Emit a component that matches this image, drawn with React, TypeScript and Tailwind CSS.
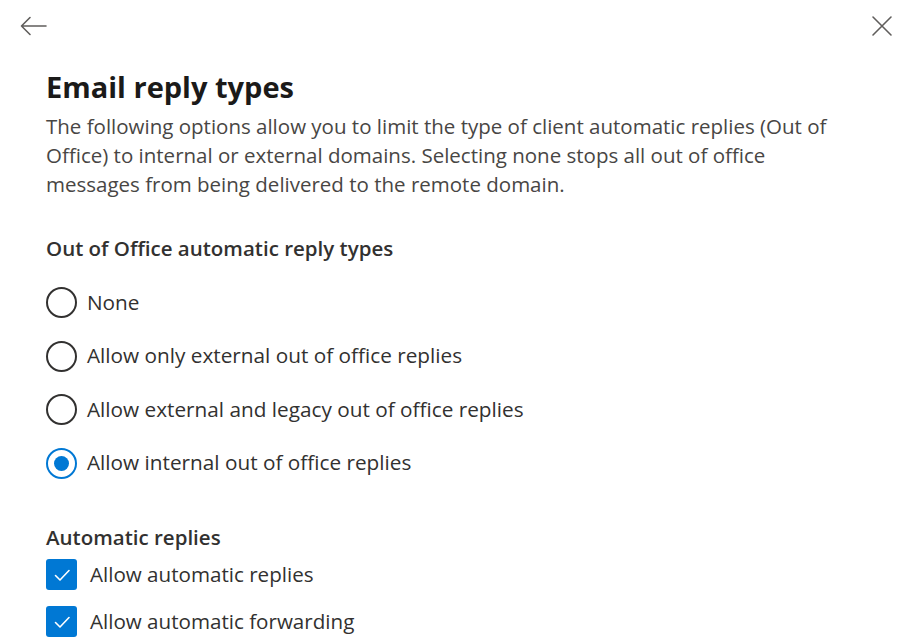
import React from "react";

function Radio({ checked, label }: { checked?: boolean; label: string }) {
  return (
    <div className="flex items-center h-[31px]">
      <div
        className={
          "w-[31px] h-[31px] rounded-full border-[2px] flex items-center justify-center shrink-0 " +
          (checked ? "border-[#0078d4]" : "border-[#323130]")
        }
      >
        {checked && <div className="w-[15px] h-[15px] rounded-full bg-[#0078d4]" />}
      </div>
      <span className="ml-[10px] text-[20.75px] text-[#323130]">{label}</span>
    </div>
  );
}

function Check({ label }: { label: string }) {
  return (
    <div className="flex items-center h-[31px]">
      <div className="w-[31px] h-[31px] rounded-[3px] bg-[#0078d4] flex items-center justify-center shrink-0">
        <svg width="22" height="22" viewBox="0 0 22 22" fill="none">
          <path d="M4.5 11.5 L9 16 L18 6.5" stroke="white" strokeWidth="1.6" strokeLinecap="round" strokeLinejoin="round" />
        </svg>
      </div>
      <span className="ml-[13px] text-[20.6px] text-[#323130]">{label}</span>
    </div>
  );
}

export default function App() {
  return (
    <div
      className="w-[897px] h-[644px] bg-white overflow-hidden"
      style={{ fontFamily: '"Open Sans", "Noto Sans", sans-serif' }}
    >
      <div className="flex justify-between items-center pl-[20px] pr-[4px] pt-[13px] h-[39px]">
        <svg width="27" height="20" viewBox="0 0 27 20" fill="none">
          <path d="M26 10 H1.5 M10 1.5 L1.5 10 L10 18.5" stroke="#605e5c" strokeWidth="1.6" strokeLinecap="round" strokeLinejoin="round" />
        </svg>
        <svg width="22" height="22" viewBox="0 0 22 22" fill="none">
          <path d="M2 2 L20 20 M20 2 L2 20" stroke="#605e5c" strokeWidth="1.6" strokeLinecap="round" />
        </svg>
      </div>
      <div className="pl-[46px] pr-[40px]">
        <h1 className="mt-[29px] text-[29px] font-bold text-[#1b1a19] leading-[38px]">Email reply types</h1>
        <p className="mt-[6px] w-[810px] text-[20.5px] leading-[29px] text-[#484644]">
          The following options allow you to limit the type of client automatic replies (Out of Office) to internal or
          external domains. Selecting none stops all out of office messages from being delivered to the remote domain.
        </p>
        <div className="mt-[34px] text-[20.5px] font-semibold text-[#323130] leading-[30px]">Out of Office automatic reply types</div>
        <div className="mt-[24px] flex flex-col gap-[22.5px]">
          <Radio label="None" />
          <Radio label="Allow only external out of office replies" />
          <Radio label="Allow external and legacy out of office replies" />
          <Radio checked label="Allow internal out of office replies" />
        </div>
        <div className="mt-[43.5px] text-[20.5px] font-semibold text-[#323130] leading-[30px]">Automatic replies</div>
        <div className="mt-[7px] flex flex-col gap-[16px]">
          <Check label="Allow automatic replies" />
          <Check label="Allow automatic forwarding" />
        </div>
      </div>
    </div>
  );
}
